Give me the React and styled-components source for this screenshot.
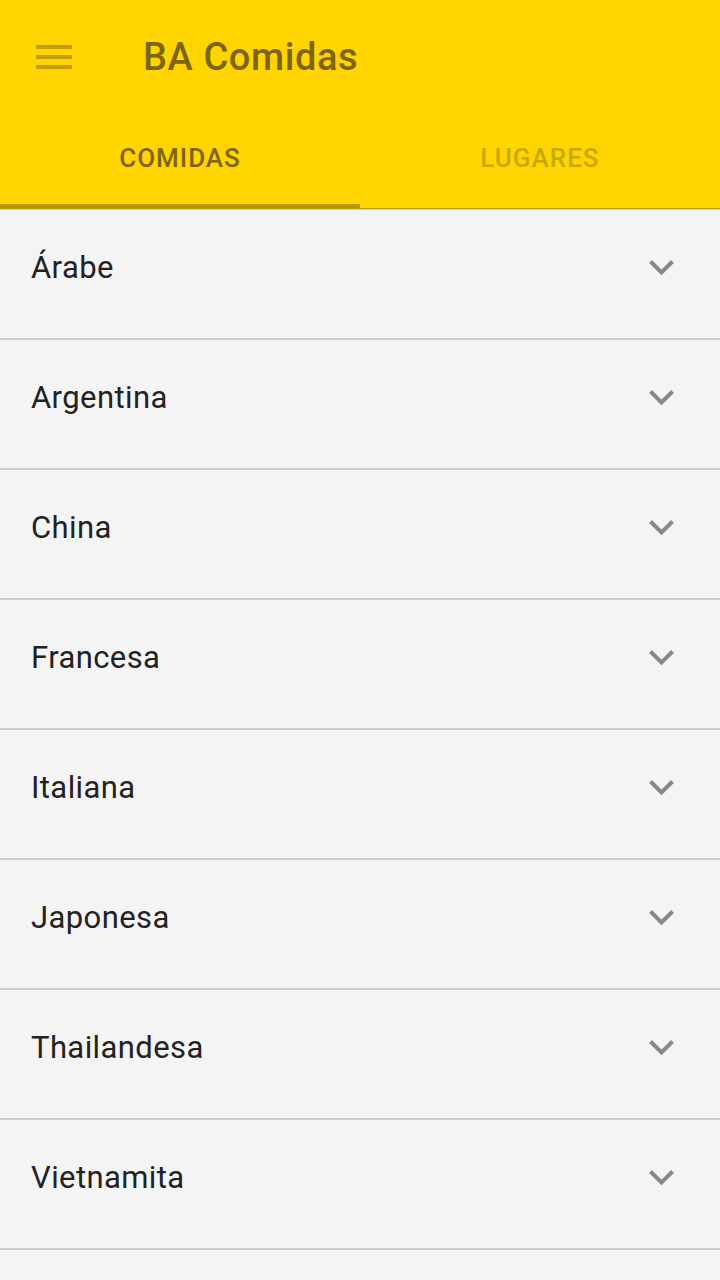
import React from 'react'
import styled, { createGlobalStyle } from 'styled-components'

const GlobalStyle = createGlobalStyle`
  body {
    margin: 0;
    background: #f4f4f4;
    font-family: Roboto, 'Noto Sans', sans-serif;
  }
`

const Page = styled.div`
  width: 720px;
  min-height: 1280px;
  background: #f4f4f4;
`

const Header = styled.header`
  background: #ffd400;
  border-bottom: 1px solid #b89a00;
`

const Toolbar = styled.div`
  height: 118px;
  display: flex;
  align-items: center;
  padding: 0 0 4px 36px;
  box-sizing: border-box;
`

const MenuButton = styled.div`
  width: 36px;
  height: 24px;
  display: flex;
  flex-direction: column;
  justify-content: space-between;
  margin-right: 71px;
  span {
    display: block;
    height: 4px;
    background: #bf9e00;
  }
`

const Title = styled.h1`
  margin: 0;
  font-size: 38px;
  font-weight: 500;
  color: #7d6410;
  letter-spacing: 0.6px;
`

const Tabs = styled.nav`
  display: flex;
  height: 90px;
`

const Tab = styled.div`
  flex: 1;
  display: flex;
  align-items: center;
  justify-content: center;
  font-size: 26px;
  font-weight: 500;
  letter-spacing: 1px;
  padding-bottom: 7px;
  box-sizing: border-box;
  color: ${p => (p.active ? '#7d6410' : '#c9a900')};
  border-bottom: 4px solid ${p => (p.active ? '#b89a00' : 'transparent')};
`

const List = styled.ul`
  list-style: none;
  margin: 0;
  padding: 0;
  border-top: 1px solid #d6d6d6;
`

const Row = styled.li`
  height: 130px;
  box-sizing: border-box;
  display: flex;
  align-items: center;
  justify-content: space-between;
  padding: 0 45px 14px 31px;
  border-bottom: 2px solid #cdcdcd;
`

const Label = styled.span`
  font-size: 31px;
  color: #222;
  letter-spacing: 0.4px;
`

const Chevron = () => (
  <svg width="27" height="17" viewBox="0 0 27 17">
    <path d="M2.5 2.5 L13.5 13.5 L24.5 2.5" fill="none" stroke="#888" strokeWidth="4" />
  </svg>
)

const comidas = ['Árabe', 'Argentina', 'China', 'Francesa', 'Italiana', 'Japonesa', 'Thailandesa', 'Vietnamita']

export default function App() {
  return (
    <Page>
      <GlobalStyle />
      <Header>
        <Toolbar>
          <MenuButton>
            <span />
            <span />
            <span />
          </MenuButton>
          <Title>BA Comidas</Title>
        </Toolbar>
        <Tabs>
          <Tab active>COMIDAS</Tab>
          <Tab>LUGARES</Tab>
        </Tabs>
      </Header>
      <List>
        {comidas.map(c => (
          <Row key={c}>
            <Label>{c}</Label>
            <Chevron />
          </Row>
        ))}
      </List>
    </Page>
  )
}
